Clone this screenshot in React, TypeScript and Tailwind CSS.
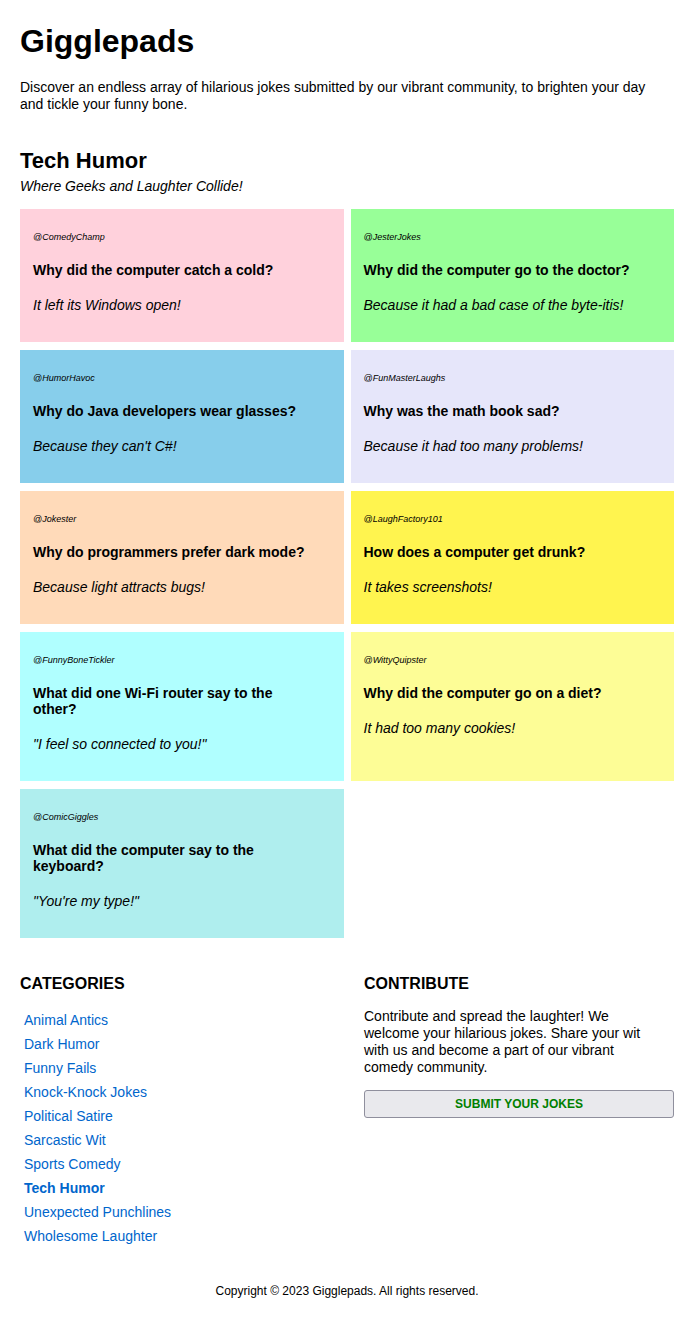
import React from "react";

type Joke = {
  author: string;
  question: string;
  answer: string;
  color: string;
};

const jokes: Joke[] = [
  {
    author: "@ComedyChamp",
    question: "Why did the computer catch a cold?",
    answer: "It left its Windows open!",
    color: "bg-[#ffd1dc]",
  },
  {
    author: "@JesterJokes",
    question: "Why did the computer go to the doctor?",
    answer: "Because it had a bad case of the byte-itis!",
    color: "bg-[#98ff98]",
  },
  {
    author: "@HumorHavoc",
    question: "Why do Java developers wear glasses?",
    answer: "Because they can't C#!",
    color: "bg-[#87ceeb]",
  },
  {
    author: "@FunMasterLaughs",
    question: "Why was the math book sad?",
    answer: "Because it had too many problems!",
    color: "bg-[#e6e6fa]",
  },
  {
    author: "@Jokester",
    question: "Why do programmers prefer dark mode?",
    answer: "Because light attracts bugs!",
    color: "bg-[#ffdab9]",
  },
  {
    author: "@LaughFactory101",
    question: "How does a computer get drunk?",
    answer: "It takes screenshots!",
    color: "bg-[#fff44f]",
  },
  {
    author: "@FunnyBoneTickler",
    question: "What did one Wi-Fi router say to the other?",
    answer: "\"I feel so connected to you!\"",
    color: "bg-[#b0ffff]",
  },
  {
    author: "@WittyQuipster",
    question: "Why did the computer go on a diet?",
    answer: "It had too many cookies!",
    color: "bg-[#fdfd96]",
  },
  {
    author: "@ComicGiggles",
    question: "What did the computer say to the keyboard?",
    answer: "\"You're my type!\"",
    color: "bg-[#afeeee]",
  },
];

const categories = [
  "Animal Antics",
  "Dark Humor",
  "Funny Fails",
  "Knock-Knock Jokes",
  "Political Satire",
  "Sarcastic Wit",
  "Sports Comedy",
  "Tech Humor",
  "Unexpected Punchlines",
  "Wholesome Laughter",
];

function JokeCard({ joke }: { joke: Joke }) {
  return (
    <div className={`${joke.color} px-[13px] pt-[23px] pb-[29px]`}>
      <p className="text-[9px] italic leading-[11px]">{joke.author}</p>
      <h3 className="mt-[19px] pr-[16px] text-[14px] font-bold leading-4">{joke.question}</h3>
      <p className="mt-[19px] text-[14px] italic leading-4">{joke.answer}</p>
    </div>
  );
}

export default function App() {
  return (
    <div className="min-h-[1328px] bg-white px-5 pt-[23px] font-['Liberation_Sans',Arial,sans-serif] text-black">
      {/* Header */}
      <h1 className="text-[32px] font-bold leading-[37px]">Gigglepads</h1>
      <p className="mt-[19px] pr-[6px] text-[14px] leading-[17px]">
        Discover an endless array of hilarious jokes submitted by our vibrant community, to brighten your day
        and tickle your funny bone.
      </p>

      {/* Category */}
      <h2 className="mt-[35px] text-[22px] font-bold leading-[26px]">Tech Humor</h2>
      <p className="mt-[4px] text-[14px] italic leading-4">Where Geeks and Laughter Collide!</p>

      <div className="mt-[15px] grid grid-cols-2 gap-x-[7px] gap-y-[8px]">
        {jokes.map((joke) => (
          <JokeCard joke={joke} key={joke.author} />
        ))}
      </div>

      {/* Bottom sections */}
      <div className="mt-[36px] grid grid-cols-[310px_1fr] gap-x-[34px]">
        <div>
          <h2 className="text-[16px] font-bold leading-[19px]">CATEGORIES</h2>
          <ul className="mt-[19px] flex flex-col gap-[8px] pl-1">
            {categories.map((cat) => (
              <li key={cat} className="text-[14px] leading-4">
                <a href="#" className={`text-[#0066cc] ${cat === "Tech Humor" ? "font-bold" : ""}`}>
                  {cat}
                </a>
              </li>
            ))}
          </ul>
        </div>
        <div>
          <h2 className="text-[16px] font-bold leading-[19px]">CONTRIBUTE</h2>
          <p className="mt-[15px] pr-[14px] text-[14px] leading-[17px]">
            Contribute and spread the laughter! We welcome your hilarious jokes. Share your wit with us and become a
            part of our vibrant comedy community.
          </p>
          <button className="mt-[14px] h-[28px] w-full rounded-[3px] border border-[#8f8f9d] bg-[#e9e9ed] text-[12px] font-bold text-[#008000]">
            SUBMIT YOUR JOKES
          </button>
        </div>
      </div>

      {/* Footer */}
      <p className="mt-[40px] pb-[29px] text-center text-[12px] leading-[14px]">
        Copyright © 2023 Gigglepads. All rights reserved.
      </p>
    </div>
  );
}
